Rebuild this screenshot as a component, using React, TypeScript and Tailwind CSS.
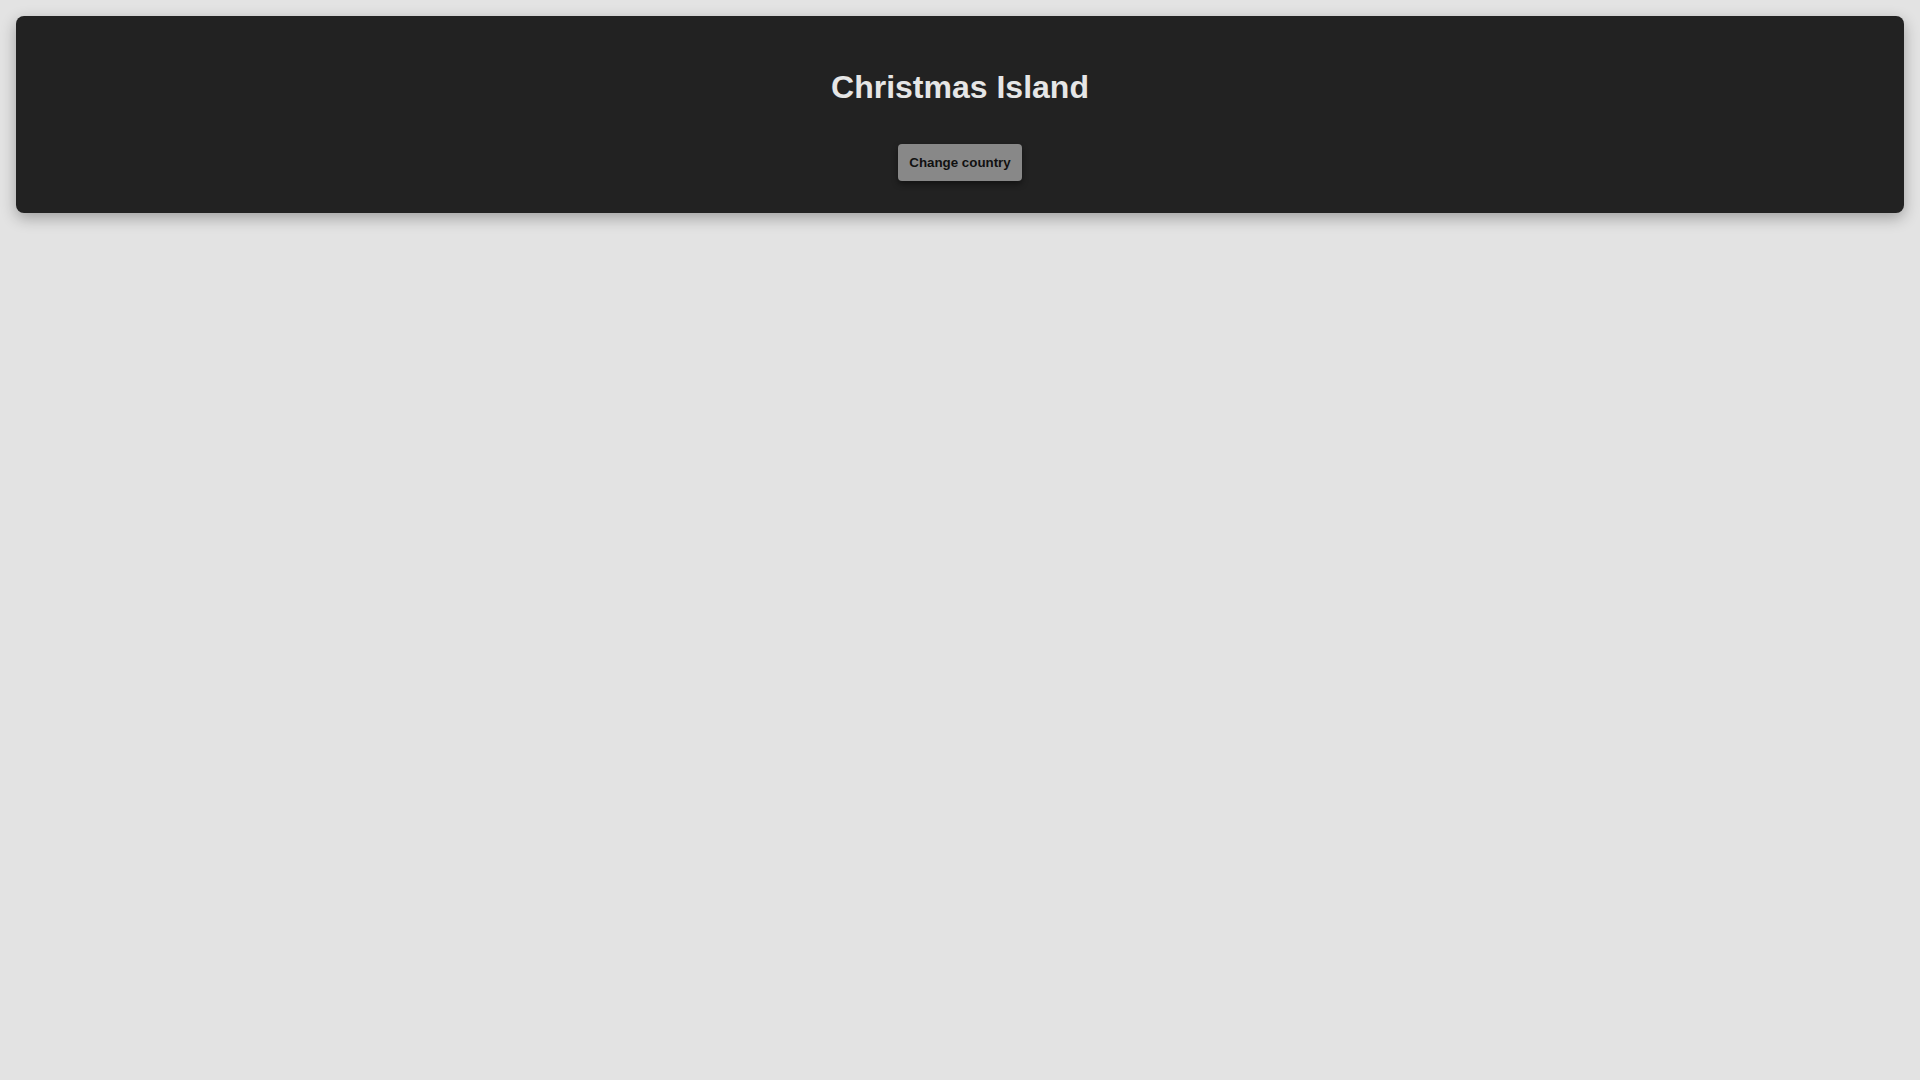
export default function App() {
  return (
    <div className="min-h-screen bg-[#e3e3e3] p-4" style={{ fontFamily: '"Liberation Sans", Arial, sans-serif' }}>
      <div className="flex flex-col items-center rounded-lg bg-[#222222] pt-[53px] pb-[32px] shadow-[0_5px_15px_rgba(0,0,0,0.3)]">
        <h1 className="text-[32px] leading-[37px] font-bold text-[#e6e6e6]">Christmas Island</h1>
        <button className="mt-[38px] rounded-[4px] bg-[#888888] px-[11px] py-[11px] text-[13.333px] leading-[15px] font-bold text-[#111111] shadow-[0_3px_6px_rgba(0,0,0,0.45)]">
          Change country
        </button>
      </div>
    </div>
  );
}
